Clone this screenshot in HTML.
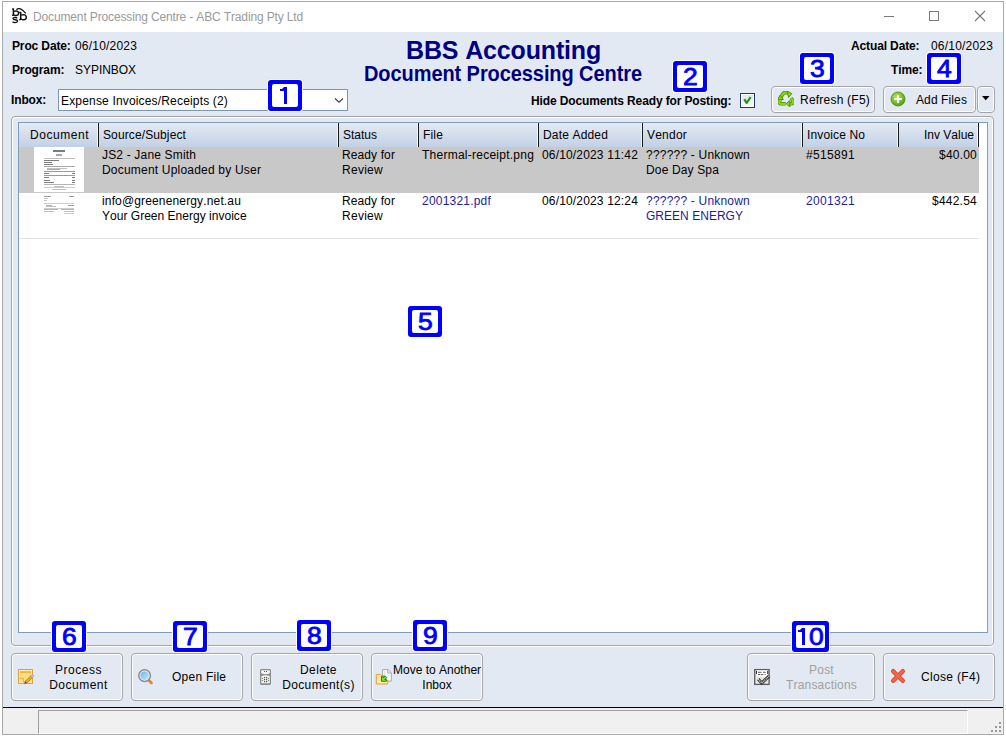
<!DOCTYPE html>
<html><head><meta charset="utf-8">
<style>
*{margin:0;padding:0;box-sizing:border-box}
html,body{width:1006px;height:736px;overflow:hidden;background:#fff}
body{position:relative;font-kerning:none;font-family:"Liberation Sans",sans-serif;font-size:12px;line-height:15px;color:#000}
.a{position:absolute;white-space:nowrap}
.b{font-weight:bold}
#win{position:absolute;left:2px;top:1px;width:1002px;height:734px;border:1px solid #a9a9a9;background:#e3e9f2}
#title{position:absolute;left:3px;top:2px;width:1000px;height:30px;background:#fff}
#status{position:absolute;left:3px;top:708px;width:1000px;height:26px;background:#f0f0f0}
#blk{position:absolute;left:3px;top:707px;width:1000px;height:1px;background:#000}
.btn{position:absolute;border:1px solid #a5a5a5;border-radius:4px;background:#e3e9f2;box-shadow:inset 0 0 0 1px #fff}
.bt{position:absolute;text-align:center;white-space:nowrap}
.badge{position:absolute;width:34px;height:31px;background:#0000ff;border-radius:3px;color:#0000ff;font-size:23px;text-align:center;line-height:32px;box-shadow:0 0 0 1px #fff;-webkit-text-stroke:0.8px #0000ff}
.badge::before{content:"";position:absolute;left:4px;top:4px;right:4px;bottom:4px;background:#fff;border-radius:2px}
.badge span{position:relative;display:inline-block;transform:scaleX(1.15)}
.grp{position:absolute;border:1px solid #a5a5a5;border-radius:4px;box-shadow:inset 1px 1px 0 #fff, inset -1px 0 0 #fff, 0 1px 0 #fff}
.sep{position:absolute;top:123px;height:24px;width:1px;background:#1a1a1a;box-shadow:-1px 0 0 #f4f7fb}
.hd{position:absolute;top:128px;white-space:nowrap}
.c{position:absolute;white-space:nowrap}
.nv{color:#1c1c9c}
</style></head><body>
<div id="win"></div>
<div id="title"></div>
<!-- bbs logo -->
<svg class="a" style="left:8px;top:4px" width="24" height="24" viewBox="8 4 24 24" fill="none" stroke="#111">
 <path d="M13.4 8.5V15.7M12.1 8.9H13.6M12.1 15.3H13.4" stroke-width="1.5"/>
 <path d="M13.6 11.6Q14.6 10.9 16 10.9Q18.5 11 18.6 13.2Q18.5 15.5 16 15.5Q14.5 15.5 13.6 14.8" stroke-width="1.4"/>
 <path d="M17.3 18.2Q16.4 17.4 15 17.4Q12.9 17.6 13.1 18.7Q13.4 19.5 15.2 19.8Q17.6 20.2 17.5 21.4Q17.2 22.6 15 22.6Q13.4 22.6 12.5 21.8" stroke-width="1.4"/>
 <path d="M20.7 12.1V20M19.2 12.5H21M19.2 19.6H20.8" stroke-width="1.5"/>
 <path d="M21 15.3Q22 14.6 23.5 14.6Q26.2 14.8 26.3 17.2Q26.2 19.8 23.5 19.8Q21.9 19.8 21 19" stroke-width="1.4"/>
 <path d="M16.3 9.6Q19.8 6.2 25.8 13.4" stroke-width="1.25"/>
</svg>
<div class="a" style="left:33px;top:10px;color:#9a9a9a;font-size:12px;letter-spacing:-0.14px">Document Processing Centre - ABC Trading Pty Ltd</div>
<!-- window controls -->
<div class="a" style="left:884px;top:16px;width:10px;height:1px;background:#777"></div>
<div class="a" style="left:929px;top:11px;width:10px;height:10px;border:1px solid #7a7a7a"></div>
<svg class="a" style="left:974px;top:10px" width="12" height="12" viewBox="0 0 12 12"><path d="M1 1L11 11M11 1L1 11" stroke="#777" stroke-width="1.1"/></svg>

<div id="blk"></div>
<div id="status"></div>
<div class="a" style="left:38px;top:710px;width:930px;height:24px;border-top:1px solid #a0a0a0;border-left:1px solid #a0a0a0;border-right:1px solid #fff;border-bottom:1px solid #fff"></div>
<svg class="a" style="left:990px;top:721px" width="12" height="12" viewBox="0 0 12 12" fill="#999">
<rect x="9" y="1" width="2" height="2"/><rect x="5" y="5" width="2" height="2"/><rect x="9" y="5" width="2" height="2"/><rect x="1" y="9" width="2" height="2"/><rect x="5" y="9" width="2" height="2"/><rect x="9" y="9" width="2" height="2"/>
</svg>

<!-- header -->
<div class="a b" style="left:12px;top:39px;letter-spacing:-0.130px">Proc Date:</div>
<div class="a" style="left:75px;top:39px;letter-spacing:0.194px">06/10/2023</div>
<div class="a b" style="left:12px;top:63px;letter-spacing:-0.130px">Program:</div>
<div class="a" style="left:75px;top:63px;letter-spacing:-0.044px">SYPINBOX</div>
<div class="a b" style="left:11px;top:93px;letter-spacing:-0.130px">Inbox:</div>
<div class="a" style="left:58px;top:89px;width:290px;height:22px;background:#fff;border:1px solid #7a96b2"></div>
<div class="a" style="left:61px;top:94px;letter-spacing:0.17px">Expense Invoices/Receipts (2)</div>
<svg class="a" style="left:334px;top:97px" width="10" height="7" viewBox="0 0 10 7"><path d="M1 1.5L5 5.2L9 1.5" fill="none" stroke="#444" stroke-width="1.3"/></svg>

<div class="a b" style="left:406px;top:36px;font-size:25px;line-height:28px;color:#000080;letter-spacing:-0.15px">BBS Accounting</div>
<div class="a b" style="left:364px;top:62px;font-size:20px;line-height:24px;color:#000080;letter-spacing:-0.08px;transform:scaleY(1.07);transform-origin:0 19px">Document Processing Centre</div>

<div class="a b" style="left:851px;top:39px;letter-spacing:-0.130px">Actual Date:</div>
<div class="a" style="left:931px;top:39px;letter-spacing:0.194px">06/10/2023</div>
<div class="a b" style="left:891px;top:63px;letter-spacing:-0.130px">Time:</div>
<div class="a b" style="left:531px;top:94px;letter-spacing:-0.130px">Hide Documents Ready for Posting:</div>
<!-- checkbox -->
<div class="a" style="left:740px;top:93px;width:15px;height:15px;border:1px solid #1c3c6c;background:linear-gradient(#e4e4e4,#f7f7f7);box-shadow:inset 0 0 0 1px #fff"></div>
<svg class="a" style="left:740px;top:93px" width="15" height="15" viewBox="0 0 15 15"><path d="M4.2 6.2L6.6 9.8L10.6 4.2" fill="none" stroke="#1a9a1a" stroke-width="2.2" stroke-linejoin="round"/></svg>

<!-- group -->
<div class="grp" style="left:11px;top:116px;width:983px;height:530px"></div>
<div class="a" style="left:18px;top:122px;width:970px;height:511px;background:#fff;border:1px solid #7f9db9"></div>
<!-- grid header -->
<div class="a" style="left:19px;top:123px;width:960px;height:24px;background:linear-gradient(#e4eaf3,#c2d1e5)"></div>
<div class="sep" style="left:98px"></div>
<div class="sep" style="left:338px"></div>
<div class="sep" style="left:418px"></div>
<div class="sep" style="left:538px"></div>
<div class="sep" style="left:642px"></div>
<div class="sep" style="left:802px"></div>
<div class="sep" style="left:898px"></div>
<div class="sep" style="left:978px"></div>
<div class="hd" style="left:30px;letter-spacing:0.550px">Document</div>
<div class="hd" style="left:103px;letter-spacing:0.116px">Source/Subject</div>
<div class="hd" style="left:343px;letter-spacing:-0.003px">Status</div>
<div class="hd" style="left:423px;letter-spacing:0.166px">File</div>
<div class="hd" style="left:543px;letter-spacing:0.162px">Date Added</div>
<div class="hd" style="left:647px;letter-spacing:0.217px">Vendor</div>
<div class="hd" style="left:807px;letter-spacing:0.130px">Invoice No</div>
<div class="hd" style="left:898px;width:76px;text-align:right;letter-spacing:0px">Inv Value</div>

<!-- row 1 -->
<div class="a" style="left:19px;top:147px;width:960px;height:46px;background:#c8c8c8"></div>
<div class="a" style="left:34px;top:147px;width:50px;height:45px;background:#fff"></div>
<svg class="a" style="left:34px;top:147px" width="50" height="45" viewBox="0 0 50 45" fill="#7c7c7c">
<rect x="19" y="3" width="12" height="2"/><rect x="22" y="7" width="6" height="2" fill="#a6a6a6"/>
<rect x="10" y="11" width="31" height="1" fill="#c0c0c0"/>
<rect x="10" y="13" width="15" height="1"/>
<rect x="10" y="15" width="8" height="1"/><rect x="10" y="17" width="9" height="1"/>
<rect x="10" y="19" width="31" height="1" fill="#a6a6a6"/><rect x="13" y="21" width="20" height="1" fill="#c0c0c0"/><rect x="13" y="22" width="13" height="1" fill="#a6a6a6"/>
<rect x="10" y="24" width="31" height="1" fill="#9a9a9a"/>
<rect x="10" y="26" width="5" height="1"/><rect x="38" y="26" width="3" height="1"/>
<rect x="10" y="28" width="31" height="1" fill="#9a9a9a"/>
<rect x="10" y="30" width="5" height="1"/><rect x="38" y="30" width="3" height="1"/>
<rect x="10" y="33" width="6" height="1"/><rect x="38" y="33" width="3" height="1"/>
<rect x="10" y="35" width="10" height="1"/><rect x="38" y="35" width="3" height="1"/>
<rect x="10" y="37" width="31" height="1" fill="#b4b4b4"/><rect x="20" y="39" width="10" height="1" fill="#c0c0c0"/>
<rect x="10" y="40" width="31" height="1" fill="#cdcdcd"/><rect x="18" y="42" width="14" height="1" fill="#c0c0c0"/>
</svg>
<div class="c" style="left:102px;top:148px;letter-spacing:0.170px">JS2 - Jane Smith</div>
<div class="c" style="left:102px;top:163px;letter-spacing:0.200px">Document Uploaded by User</div>
<div class="c" style="left:342px;top:148px;letter-spacing:0.108px">Ready for</div>
<div class="c" style="left:342px;top:163px;letter-spacing:0.276px">Review</div>
<div class="c" style="left:422px;top:148px;letter-spacing:0.250px">Thermal-receipt.png</div>
<div class="c" style="left:542px;top:148px;letter-spacing:0.161px">06/10/2023 11:42</div>
<div class="c" style="left:646px;top:148px;letter-spacing:0.204px">?????? - Unknown</div>
<div class="c" style="left:646px;top:163px;letter-spacing:0.148px">Doe Day Spa</div>
<div class="c" style="left:806px;top:148px;letter-spacing:0.326px">#515891</div>
<div class="c" style="left:898px;top:148px;width:79px;text-align:right;letter-spacing:0.216px">$40.00</div>

<!-- row 2 -->
<svg class="a" style="left:34px;top:193px" width="50" height="30" viewBox="0 0 50 30" fill="#9a9a9a">
<rect x="10" y="3" width="7" height="1"/><rect x="35" y="3" width="5" height="1"/>
<rect x="10" y="5" width="4" height="1" fill="#c0c0c0"/><rect x="10" y="7" width="3" height="1" fill="#c0c0c0"/>
<rect x="10" y="10" width="30" height="1" fill="#cdcdcd"/>
<rect x="12" y="12" width="6" height="1" fill="#b4b4b4"/><rect x="34" y="12" width="6" height="1"/>
<rect x="12" y="13" width="10" height="1" fill="#c0c0c0"/>
<rect x="10" y="15" width="30" height="1" fill="#cdcdcd"/>
<rect x="10" y="16" width="14" height="1" fill="#b4b4b4"/><rect x="27" y="16" width="13" height="1" fill="#b4b4b4"/>
<rect x="10" y="18" width="10" height="1" fill="#c0c0c0"/><rect x="30" y="18" width="10" height="1" fill="#c0c0c0"/>
<rect x="30" y="20" width="10" height="1" fill="#cdcdcd"/>
</svg>
<div class="c" style="left:102px;top:194px;letter-spacing:0.147px">info@greenenergy.net.au</div>
<div class="c" style="left:102px;top:209px;letter-spacing:0.020px">Your Green Energy invoice</div>
<div class="c" style="left:342px;top:194px;letter-spacing:0.108px">Ready for</div>
<div class="c" style="left:342px;top:209px;letter-spacing:0.276px">Review</div>
<div class="c nv" style="left:422px;top:194px;letter-spacing:0.206px">2001321.pdf</div>
<div class="c" style="left:542px;top:194px;letter-spacing:0.161px">06/10/2023 12:24</div>
<div class="c nv" style="left:646px;top:194px;letter-spacing:0.204px">?????? - Unknown</div>
<div class="c nv" style="left:646px;top:209px;letter-spacing:0.026px">GREEN ENERGY</div>
<div class="c nv" style="left:806px;top:194px;letter-spacing:0.326px">2001321</div>
<div class="c" style="left:898px;top:194px;width:79px;text-align:right;letter-spacing:0.232px">$442.54</div>
<div class="a" style="left:19px;top:238px;width:960px;height:1px;background:#e3e3e3"></div>

<!-- top buttons -->
<div class="btn" style="left:771px;top:86px;width:104px;height:27px"></div>
<svg class="a" style="left:778px;top:91px" width="16" height="16" viewBox="0 0 16 16">
 <g stroke-linejoin="round">
 <path d="M2.2 7.2L5.2 2.6Q5.8 1.6 7 1.6H9.6" fill="none" stroke="#3f8f00" stroke-width="3.6"/>
 <path d="M2.2 7.2L5.2 2.6Q5.8 1.6 7 1.6H9.6" fill="none" stroke="#8fd21c" stroke-width="2.2"/>
 <path d="M9 -0.2L13.8 2.6L10.6 6.4Z" fill="#8fd21c" stroke="#3f8f00" stroke-width="0.9"/>
 <path d="M13.2 6.8L14.9 10Q15.6 12.4 13.4 12.8H11" fill="none" stroke="#3f8f00" stroke-width="3.6"/>
 <path d="M13.2 6.8L14.9 10Q15.6 12.4 13.4 12.8H11" fill="none" stroke="#8fd21c" stroke-width="2.2"/>
 <path d="M11.8 9.4L8.2 12.8L11.8 16Z" fill="#8fd21c" stroke="#3f8f00" stroke-width="0.9"/>
 <path d="M7.6 12.8H3.2Q0.9 12.6 1.4 10.4L2.4 8.6" fill="none" stroke="#3f8f00" stroke-width="3.6"/>
 <path d="M7.6 12.8H3.2Q0.9 12.6 1.4 10.4L2.4 8.6" fill="none" stroke="#8fd21c" stroke-width="2.2"/>
 <path d="M-0.4 8.2L2.2 4.2L5.4 8.6Z" fill="#8fd21c" stroke="#3f8f00" stroke-width="0.9"/>
 </g>
</svg>
<div class="bt" style="left:771px;top:93px;width:104px;padding-left:29px;text-align:left;letter-spacing:0.220px">Refresh (F5)</div>
<div class="btn" style="left:883px;top:86px;width:93px;height:27px"></div>
<svg class="a" style="left:890px;top:91px" width="16" height="16" viewBox="0 0 16 16">
 <defs><radialGradient id="gp" cx="0.4" cy="0.35" r="0.7"><stop offset="0" stop-color="#b9e85a"/><stop offset="1" stop-color="#4f9c0c"/></radialGradient></defs>
 <circle cx="8" cy="8" r="7" fill="url(#gp)" stroke="#3f8a08" stroke-width="0.8"/>
 <rect x="4" y="7" width="8" height="2" fill="#fff"/><rect x="7" y="4" width="2" height="8" fill="#fff"/>
</svg>
<div class="bt" style="left:916px;top:93px;letter-spacing:0.109px">Add Files</div>
<div class="btn" style="left:977px;top:86px;width:18px;height:27px"></div>
<svg class="a" style="left:982px;top:96px" width="8" height="5" viewBox="0 0 8 5"><path d="M0 0H7.5L3.75 4.2Z" fill="#000"/></svg>

<!-- bottom buttons -->
<div class="btn" style="left:11px;top:653px;width:112px;height:48px"></div>
<svg class="a" style="left:14px;top:664px" width="24" height="24" viewBox="14 664 24 24">
 <rect x="18.5" y="669.5" width="14" height="14" fill="#fedf80" stroke="#df9c38"/>
 <rect x="19.3" y="670.3" width="12.4" height="12.4" fill="none" stroke="#fff2b8" stroke-width="0.7"/>
 <rect x="20" y="671.2" width="11" height="1.8" fill="#f2b640"/>
 <path d="M19.3 678.3H23.3V682.7" fill="none" stroke="#d8a040" stroke-width="0.8"/>
 <path d="M24.5 683.6L25.3 681.3L31 675.6L32.7 677.3L27 683Z" fill="#f8a824" stroke="#8a5a20" stroke-width="0.6"/>
 <path d="M30.6 676L31.8 674.8L33.5 676.5L32.3 677.7Z" fill="#c8d8f0" stroke="#6a7aa0" stroke-width="0.4"/>
 <path d="M31.8 674.8L32.6 674L34.3 675.7L33.5 676.5Z" fill="#e08ae0"/>
 <path d="M24.5 683.6L25.3 681.3L26.8 682.8Z" fill="#444"/>
</svg>
<div class="bt" style="left:41px;top:663px;width:75px;letter-spacing:0.500px">Process<br>Document</div>
<div class="btn" style="left:131px;top:653px;width:112px;height:48px"></div>
<svg class="a" style="left:137px;top:668px" width="17" height="17" viewBox="0 0 17 17">
 <defs><linearGradient id="lens" x1="0" y1="0" x2="1" y2="1"><stop offset="0" stop-color="#6eb4ec"/><stop offset="1" stop-color="#bfe8fb"/></linearGradient></defs>
 <path d="M11 11.5L14.5 15" stroke="#d88a20" stroke-width="2.6" stroke-linecap="round"/>
 <circle cx="7.6" cy="7.6" r="5.8" fill="#fff" stroke="#8a8a8a" stroke-width="1.5"/>
 <circle cx="7.6" cy="7.6" r="4.3" fill="url(#lens)"/>
</svg>
<div class="bt" style="left:172px;top:670px;letter-spacing:0.250px">Open File</div>
<div class="btn" style="left:251px;top:653px;width:112px;height:48px"></div>
<svg class="a" style="left:254px;top:664px" width="24" height="24" viewBox="254 664 24 24">
 <path d="M261 669H270L271 670V684L270 685H261L260 684V670Z" fill="#8c8c8c"/>
 <path d="M261.5 670.3H269.5Q270.2 670.5 270 672.5Q269.5 674.3 265.5 674.2Q261.4 674.3 261.1 672.5Q260.9 670.5 261.5 670.3Z" fill="#f4f4f4"/>
 <path d="M261.3 676Q265.5 674.4 269.8 676V683.3H261.3Z" fill="#f0f0f0"/>
 <g fill="#555"><rect x="264" y="671" width="1" height="1"/><rect x="266" y="671" width="1" height="1"/>
 <rect x="264" y="677" width="1.2" height="1.2"/><rect x="266" y="677" width="1.2" height="1.2"/>
 <rect x="264" y="679" width="1.2" height="1.2"/><rect x="266" y="679" width="1.2" height="1.2"/>
 <rect x="264" y="681" width="1.2" height="1.2"/><rect x="266" y="681" width="1.2" height="1.2"/>
 <rect x="262" y="678" width="1" height="1" fill="#777"/><rect x="268" y="678" width="1" height="1" fill="#777"/>
 <rect x="262" y="680" width="1" height="1" fill="#777"/><rect x="268" y="680" width="1" height="1" fill="#777"/></g>
</svg>
<div class="bt" style="left:281px;top:663px;width:75px;letter-spacing:0.350px">Delete<br>Document(s)</div>
<div class="btn" style="left:371px;top:653px;width:112px;height:48px"></div>
<svg class="a" style="left:372px;top:664px" width="24" height="24" viewBox="372 664 24 24">
 <path d="M382.6 669.6H388.2L391.3 672.7V681.2H382.6Z" fill="#fdfdfd" stroke="#a8a8a8" stroke-width="1"/>
 <path d="M387.8 669.8V673H391" fill="none" stroke="#9a9a9a" stroke-width="0.9"/>
 <rect x="384" y="671" width="1.5" height="7" fill="#e4e4e4"/>
 <path d="M376.3 674.4H380.6L381.6 675.6H384.5V680.5L388.2 680.5L387.2 684H376.3Z" fill="#fbe39a" stroke="#de9a3a" stroke-width="0.9"/>
 <rect x="377.2" y="681.2" width="9.6" height="1.8" fill="#fff3b0"/>
 <path d="M381.5 676.4L383.2 676.4L383.2 678L385.2 676L386.8 677.5L384.8 679.5H386.4V681.3H381.5Z" fill="#93dc2a" stroke="#1f8a08" stroke-width="1"/>
</svg>
<div class="bt" style="left:393px;top:663px;width:88px;letter-spacing:0.000px">Move to Another<br>Inbox</div>
<div class="btn" style="left:747px;top:653px;width:128px;height:48px"></div>
<svg class="a" style="left:750px;top:664px" width="24" height="24" viewBox="750 664 24 24">
 <rect x="754.7" y="669.6" width="14.4" height="14.8" fill="#e6e6e6" stroke="#5c5c5c" stroke-width="1.3"/>
 <rect x="757" y="670.4" width="10" height="6.3" fill="#fff"/>
 <rect x="756" y="671" width="1" height="3" fill="#333"/><rect x="767.2" y="671" width="1" height="3" fill="#333"/>
 <g fill="#5a5a5a"><rect x="758" y="671.8" width="3.6" height="1"/><rect x="763" y="671.8" width="2.6" height="1"/>
 <rect x="758" y="674" width="2.2" height="1"/><rect x="761" y="674" width="2.2" height="1"/><rect x="764.6" y="674" width="1" height="1"/></g>
 <path d="M758.2 679.2L761.8 683L769.3 675.8" fill="none" stroke="#3a3a3a" stroke-width="3.2" stroke-linejoin="miter"/>
 <path d="M758.2 679.2L761.8 683L769.3 675.8" fill="none" stroke="#d8d8d8" stroke-width="1.4" stroke-dasharray="1 0.8"/>
</svg>
<div class="bt" style="left:774px;top:663px;width:95px;color:#a0a0a0;letter-spacing:0.200px">Post<br>Transactions</div>
<div class="btn" style="left:883px;top:653px;width:112px;height:48px"></div>
<svg class="a" style="left:886px;top:664px" width="24" height="24" viewBox="886 664 24 24">
 <path d="M893.2 671.2L902.8 680.8M902.8 671.2L893.2 680.8" stroke="#d8442a" stroke-width="4.4" stroke-linecap="round"/>
 <path d="M893.2 671.2L902.8 680.8M902.8 671.2L893.2 680.8" stroke="#f0664c" stroke-width="2.6" stroke-linecap="round"/>
</svg>
<div class="bt" style="left:921px;top:670px;letter-spacing:0.330px">Close (F4)</div>

<!-- badges -->
<div class="badge" style="left:268px;top:80px"><svg style="position:absolute;left:0;top:0" width="34" height="31"><path d="M16 7H19V24H16V11H12V9H14Z" fill="#0000ff"/></svg></div>
<div class="badge" style="left:673px;top:61px"><span>2</span></div>
<div class="badge" style="left:800px;top:53px"><span>3</span></div>
<div class="badge" style="left:927px;top:53px"><span>4</span></div>
<div class="badge" style="left:408px;top:306px"><span>5</span></div>
<div class="badge" style="left:52px;top:621px"><span>6</span></div>
<div class="badge" style="left:173px;top:621px"><span>7</span></div>
<div class="badge" style="left:297px;top:620px"><span>8</span></div>
<div class="badge" style="left:413px;top:620px"><span>9</span></div>
<div class="badge" style="left:792px;top:621px;width:37px"><svg style="position:absolute;left:0;top:0" width="37" height="31"><path d="M10 7H13V24H10V11H6V9H8Z" fill="#0000ff"/></svg><span style="position:absolute;left:18px;top:0">0</span></div>
</body></html>
